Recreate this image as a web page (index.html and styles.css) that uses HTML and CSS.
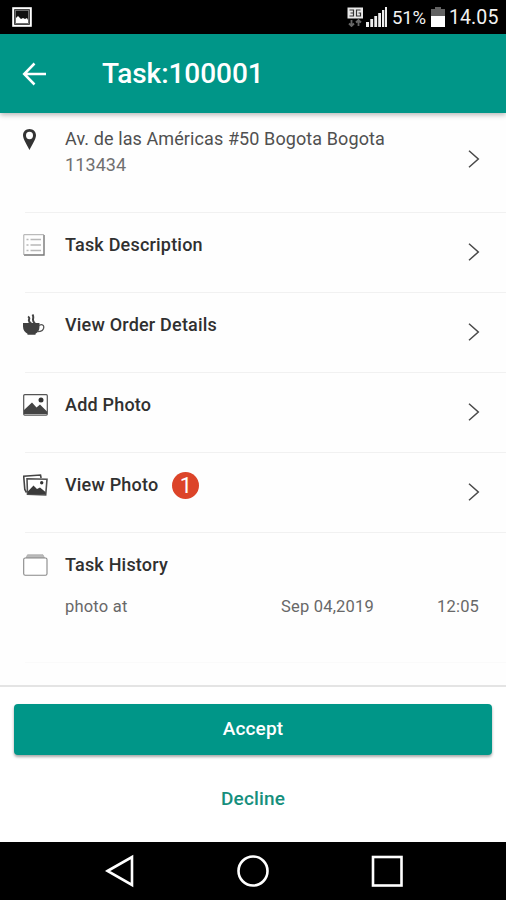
FILE: index.html
```html
<!DOCTYPE html>
<html lang="en">
<head>
<meta charset="utf-8">
<title>Task:100001</title>
<link rel="stylesheet" href="styles.css">
</head>
<body>
<div class="screen">
  <div class="status">
    <svg class="status-photo" width="20" height="20" viewBox="0 0 20 20"><rect x="1.2" y="1.2" width="17.6" height="17.6" fill="#111" stroke="#fff" stroke-width="2"/><rect x="3.4" y="3.4" width="13.2" height="13.2" fill="none" stroke="#777" stroke-width="1"/><path d="M4 16v-5l2-2 3 3 2-1 2 1 2-1 1 2v3z" fill="#fff"/></svg>
    <svg class="status-data" width="17" height="20" viewBox="0 0 17 20"><rect x="0.5" y="0.5" width="15.5" height="11" fill="#e8e8e8"/><path d="M2.5 3h4v6h-4M3.5 6h3M13.5 3h-4v6h4V6h-2" fill="none" stroke="#333" stroke-width="1.2"/><path d="M4.5 13v6M2 16.5l2.5 2.5 2.500-2.500M11.500 19v-6M9 15.500l2.500-2.500 2.500 2.500" fill="none" stroke="#666" stroke-width="1.800"/></svg>
    <svg class="status-signal" width="22" height="20" viewBox="0 0 22 20" fill="#eee"><path d="M0 15h3v5H0zM4.300 12h2.800v8H4.300zM8.300 9h2.800v11H8.300zM12.200 6H15v14h-2.800zM16 3h2.300v17H16zM19 0h2v20h-2z"/></svg>
    <span class="battery-text">51%</span>
    <svg class="status-battery" width="14" height="20" viewBox="0 0 14 20"><path d="M4 0h6v2h4v7H0V2h4z" fill="#626262"/><path d="M0 9h14v11H0z" fill="#fff"/></svg>
    <span class="clock">14.05</span>
  </div>
  <header class="header">
    <svg width="26" height="24" viewBox="0 0 26 24" fill="none" stroke="#fff" stroke-width="2.500"><path d="M12.500 1.500L2.200 12l10.300 10.500M2.500 12H24"/></svg>
    <h1>Task:100001</h1>
  </header>
  <main class="list">
    <section class="row row-address">
      <div class="icon"><svg width="14" height="22" viewBox="0 0 14 22"><path fill="#333" fill-rule="evenodd" d="M6.500 0C2.700 0 0 2.800 0 6.300c0 3.900 3.900 9.200 6.500 14.700 2.600-5.500 6.500-10.800 6.500-14.700C13 2.800 10.300 0 6.500 0zm0 2.800a3.500 3.700 0 1 1 0 7.400 3.500 3.700 0 0 1 0-7.400z"/></svg></div>
      <p class="address">Av. de las Américas #50 Bogota Bogota<br><span class="zip">113434</span></p>
      <svg class="chevron" width="12" height="18" viewBox="0 0 12 18"><path d="M1 .8L10.300 9 1 17.200"/></svg>
    </section>
    <section class="row">
      <div class="icon"><svg width="22" height="22" viewBox="0 0 22 22" fill="none"><path d="M21 1v20H1" stroke="#777" stroke-width="1.400"/><path d="M.8 21V.7H21" stroke="#aaa"/><path d="M3.500 5.500h2M3.500 11h2M3.500 16.500h2M7.500 5.500H18M7.500 11H18M7.500 16.500H18" stroke="#b8b8b8" stroke-width="1.600"/></svg></div>
      <h2>Task Description</h2>
      <svg class="chevron" width="12" height="18" viewBox="0 0 12 18"><path d="M1 .8L10.300 9 1 17.200"/></svg>
    </section>
    <section class="row">
      <div class="icon"><svg width="22" height="22" viewBox="0 0 22 22"><path d="M0 9h16.500v3.500c0 3.500-1.500 6-4 7.200v1H4.500v-1C2 18.500 0 16 0 12.500z" fill="#404040"/><path d="M16 11.500c2.500-1.500 4.800-.8 4.800 1.400 0 2.800-2.800 4.600-6.300 4.800" fill="none" stroke="#555" stroke-width="1.300"/><path d="M8.300 9.500C2.500 6 9 5 5 2.500M12 9.500C7.500 6 12 4.500 9.500.5" fill="none" stroke="#444" stroke-width="2"/></svg></div>
      <h2>View Order Details</h2>
      <svg class="chevron" width="12" height="18" viewBox="0 0 12 18"><path d="M1 .8L10.300 9 1 17.200"/></svg>
    </section>
    <section class="row">
      <div class="icon"><svg width="25" height="22" viewBox="0 0 25 22"><rect x=".7" y=".7" width="23.600" height="20.400" rx="1" fill="#fff" stroke="#555" stroke-width="1.200"/><path d="M1 20v-4l8-7.500 4.500 5 3.500-3 7 7V20z" fill="#444"/><circle cx="18" cy="6" r="2.500" fill="#333"/></svg></div>
      <h2>Add Photo</h2>
      <svg class="chevron" width="12" height="18" viewBox="0 0 12 18"><path d="M1 .8L10.300 9 1 17.200"/></svg>
    </section>
    <section class="row">
      <div class="icon"><svg width="25" height="22" viewBox="0 0 25 22"><path d="M3.500 18.500L1.800 15.500.7 2.200 17.500 1l.6 3" fill="#fff" stroke="#444" stroke-width="1.600"/><path d="M4 4.700L24 5.200 22.700 21 4.500 20.200z" fill="#fff" stroke="#505050" stroke-width="1.600"/><path d="M4.800 17.500l5.700-6 3.500 3.500 3-1.500 5.500 4.500v2.500L5 20z" fill="#3a3a3a"/><circle cx="18.700" cy="8.800" r="1.700" fill="#333"/></svg></div>
      <h2>View Photo</h2>
      <span class="badge">1</span>
      <svg class="chevron" width="12" height="18" viewBox="0 0 12 18"><path d="M1 .8L10.300 9 1 17.200"/></svg>
    </section>
    <section class="row row-history">
      <div class="icon"><svg width="25" height="22" viewBox="0 0 25 22"><path d="M3 4L4.500.8h15.500L21.500 4z" fill="#bbb" stroke="#aaa" stroke-width=".8"/><rect x=".7" y="4" width="23.300" height="17.300" rx="1.500" fill="#fff" stroke="#888" stroke-width="1.100"/></svg></div>
      <h2>Task History</h2>
      <div class="history"><span class="event">photo at</span><span class="date">Sep 04,2019</span><span class="time">12:05</span></div>
    </section>
  </main>
  <footer class="actions">
    <button class="accept">Accept</button>
    <button class="decline">Decline</button>
  </footer>
  <nav class="nav">
    <svg width="30" height="34" viewBox="0 0 30 34"><path d="M2.500 17L27 3v28z"/></svg>
    <svg width="34" height="34" viewBox="0 0 34 34"><circle cx="17" cy="17" r="14.500"/></svg>
    <svg width="34" height="34" viewBox="0 0 34 34"><rect x="3" y="3" width="28.500" height="28.500"/></svg>
  </nav>
</div>
</body>
</html>
```
FILE: styles.css
```css
* { box-sizing: border-box; }
body { margin: 0; background: #fff; font-family: Roboto, "Liberation Sans", sans-serif; }
h1, h2, p { margin: 0; white-space: nowrap; }
svg { display: block; flex: none; }
.screen { width: 506px; height: 900px; display: flex; flex-direction: column; overflow: hidden; }

.status { height: 34px; background: #000; color: #f2f2f2; display: flex; align-items: center; padding: 0 8px 0 12px; flex: none; font-size: 19px; line-height: 34px; }
.status-photo { margin-right: auto; }
.status-data { margin-right: 2px; }
.battery-text { width: 36px; margin: 2px 3px 0 4px; font-size: 18.5px; letter-spacing: -.2px; }
.clock { width: 49px; margin: 2px 0 0 4px; font-size: 19.5px; letter-spacing: .1px; }

.header { height: 79px; background: #009688; color: #fff; display: flex; align-items: center; padding-left: 22px; flex: none; box-shadow: 0 2px 5px rgba(0, 0, 0, .28); position: relative; }
.header h1 { margin-left: 54px; font-size: 28px; font-weight: 500; line-height: 36px; letter-spacing: -.05px; }

.list { flex: none; height: 572px; background: #fefefe; }
.row { height: 80px; display: flex; align-items: flex-start; padding: 21px 26px 0 23px; border-bottom: 1px solid transparent; border-image: linear-gradient(to right, transparent 26px, #f1f1f1 26px) 1; }
.icon { width: 42px; flex: none; }
.row h2 { font-size: 18px; line-height: 22px; font-weight: 500; color: #303030; letter-spacing: .2px; }
.chevron { margin: 9px 0 0 auto; fill: none; stroke: #484848; stroke-width: 1.5; }
.row-address { height: 100px; padding-top: 16px; }
.row-address .chevron { margin-top: 21px; }
.address { font-size: 18px; line-height: 26px; color: #505050; margin-top: -3px; letter-spacing: .1px; }
.zip { color: #707070; }
.badge { width: 27px; height: 27px; margin: -2px 0 0 14px; border-radius: 50%; background: #dc4429; color: #fff; font-size: 22px; line-height: 27px; text-align: center; }
.row-history { height: 130px; flex-wrap: wrap; align-content: flex-start; border-image: linear-gradient(to right, transparent 26px, #fafafa 26px) 1; }
.history { width: 100%; display: flex; padding-left: 42px; margin-top: 20px; font-size: 16.5px; line-height: 22px; color: #686868; letter-spacing: .2px; }
.event { width: 216px; }
.date { width: 156px; }

.actions { height: 157px; flex: none; border-top: 2px solid #e4e4e4; padding: 17px 14px 0; display: flex; flex-direction: column; background: #fff; }
button { border: 0; padding: 0; font-family: inherit; font-size: 19px; font-weight: 500; letter-spacing: .15px; }
.accept { height: 51px; padding-bottom: 2px; border-radius: 4px; background: #009688; color: #fff; box-shadow: 0 2px 3px rgba(0, 0, 0, .35); }
.decline { height: 36px; margin-top: 25px; background: none; color: #168f7d; }

.nav { height: 58px; flex: none; background: #000; display: flex; align-items: center; padding-left: 105px; }
.nav svg { fill: none; stroke: #fff; stroke-width: 2.6; }
.nav svg + svg { margin-left: 101px; }
.nav svg:last-child { margin-left: 100px; }
```
